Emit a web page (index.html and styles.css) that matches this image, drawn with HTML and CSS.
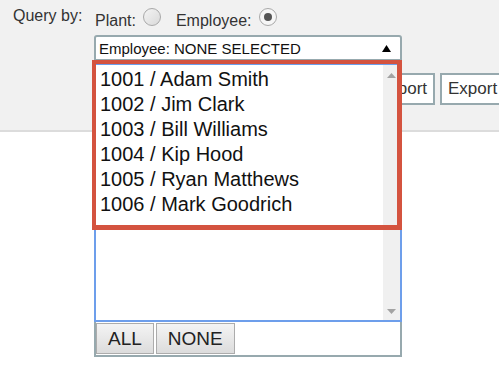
FILE: index.html
```html
<!DOCTYPE html>
<html lang="en">
<head>
    <meta charset="UTF-8">
    <meta name="viewport" content="width=device-width, initial-scale=1.0">
    <title>Query by Employee</title>
    <link rel="stylesheet" href="styles.css">
</head>
<body>

<!-- Barra de consulta -->
<div class="toolbar">
    <div class="query-label">Query by:</div>

    <div class="query-col">
        <div class="mode-row">
            <label class="mode"><span class="mode-text">Plant:</span><input type="radio" name="mode" class="radio"></label>
            <label class="mode"><span class="mode-text">Employee:</span><input type="radio" name="mode" class="radio" checked></label>
        </div>

        <!-- Selector de empleados (abierto) -->
        <div class="picker">
            <div class="picker-field">
                <span>Employee: NONE SELECTED</span>
                <svg class="caret" width="9" height="7" viewBox="0 0 9 7"><path d="M4.5 0 L9 7 L0 7 Z" fill="#000"/></svg>
            </div>

            <div class="picker-panel">
                <div class="listbox">
                    <ul class="options">
                        <li>1001 / Adam Smith</li>
                        <li>1002 / Jim Clark</li>
                        <li>1003 / Bill Williams</li>
                        <li>1004 / Kip Hood</li>
                        <li>1005 / Ryan Matthews</li>
                        <li>1006 / Mark Goodrich</li>
                    </ul>
                    <div class="scrollbar">
                        <svg width="9" height="5" viewBox="0 0 9 5"><path d="M4.5 0 L9 5 L0 5 Z" fill="#a3a3a3"/></svg>
                        <svg width="9" height="5" viewBox="0 0 9 5"><path d="M0 0 L9 0 L4.5 5 Z" fill="#a3a3a3"/></svg>
                    </div>
                </div>
                <div class="picker-buttons">
                    <button>ALL</button>
                    <button>NONE</button>
                </div>
                <!-- Marca roja sobre la lista -->
                <div class="highlight"></div>
            </div>
        </div>

        <div class="actions">
            <button>Report</button>
            <button>Export</button>
        </div>
    </div>
</div>

</body>
</html>
```

FILE: styles.css
```css
/* Estilos generales */
body, html {
    margin: 0;
    padding: 0;
    height: 100%;
    overflow: hidden;
    background-color: #fff;
    font-family: "Liberation Sans", Arial, sans-serif;
    color: #333;
}

/* Barra superior gris */
.toolbar {
    display: flex;
    box-sizing: border-box;
    height: 132px;
    padding: 7px 0 0 13px;
    background-color: #f1f1f1;
    border-bottom: 2px solid #dcdcdc;
}

.query-label {
    width: 81px;
    flex-shrink: 0;
    font-size: 16px;
    line-height: 18px;
}

.query-col {
    display: flex;
    flex-direction: column;
    flex-shrink: 0;
}

.mode-row {
    display: flex;
    height: 23px;
    padding-left: 1px;
}

.mode {
    display: flex;
    align-items: flex-start;
    margin-right: 15px;
    font-size: 16px;
    line-height: 18px;
}

.mode-text {
    padding-top: 5px;
}

/* Radio dibujado a mano */
.radio {
    appearance: none;
    -webkit-appearance: none;
    box-sizing: border-box;
    width: 18px;
    height: 18px;
    margin: 1px 0 0 7px;
    border: 1px solid #a9a9a9;
    border-radius: 50%;
    background: linear-gradient(135deg, #f4f4f4, #d9d9d9);
    position: relative;
}

.radio:checked {
    background: #f6f6f6;
}

.radio:checked::after {
    content: "";
    position: absolute;
    left: 4px;
    top: 4px;
    width: 8px;
    height: 8px;
    border-radius: 50%;
    background-color: #555;
}

/* Selector */
.picker {
    position: relative;
    margin-top: 5px;
    width: 308px;
}

.picker-field {
    box-sizing: border-box;
    height: 26px;
    display: flex;
    align-items: center;
    justify-content: space-between;
    padding: 0 9px 0 3px;
    background-color: #fff;
    border: 2px solid #97a9ae;
    border-radius: 3px 3px 0 0;
    font-size: 15px;
    color: #111;
}

.caret {
    margin-top: 1px;
}

.picker-panel {
    position: absolute;
    top: 26px;
    left: 0;
    width: 308px;
    z-index: 2;
}

.listbox {
    box-sizing: border-box;
    display: flex;
    height: 259px;
    margin-top: 2px;
    background-color: #fff;
    border: 2px solid #6d9eeb;
}

.options {
    flex: 1;
    list-style: none;
    margin: 0;
    padding: 2px 0 0 4px;
    font-size: 20px;
    line-height: 25px;
    color: #111;
}

.scrollbar {
    width: 17px;
    display: flex;
    flex-direction: column;
    justify-content: space-between;
    align-items: center;
    padding: 8px 0 6px;
    background-color: #f0f0f0;
}

.picker-buttons {
    box-sizing: border-box;
    display: flex;
    gap: 2px;
    height: 35px;
    padding: 1px 0;
    background-color: #fff;
    border: 2px solid #97a9ae;
    border-top: none;
}

.picker-buttons button {
    height: 31px;
    padding: 0 11px;
    border: 1px solid #acacac;
    background: linear-gradient(#f4f4f4, #dcdcdc);
    font-family: "Liberation Sans", Arial, sans-serif;
    font-size: 19px;
    color: #222;
}

/* Rectángulo rojo de resaltado */
.highlight {
    position: absolute;
    top: -1px;
    left: -2px;
    box-sizing: border-box;
    width: 310px;
    height: 170px;
    border-style: solid;
    border-color: #d4533f;
    border-width: 4px 5px 5px 4px;
    pointer-events: none;
}

/* Botones detrás del desplegable */
.actions {
    display: flex;
    gap: 5px;
    margin-top: 12px;
    padding-left: 274px;
}

.actions button {
    height: 32px;
    padding: 0 6px;
    border: 2px solid #97a9ae;
    background-color: #fff;
    font-family: "Liberation Sans", Arial, sans-serif;
    font-size: 17px;
    color: #333;
    white-space: nowrap;
}
```
